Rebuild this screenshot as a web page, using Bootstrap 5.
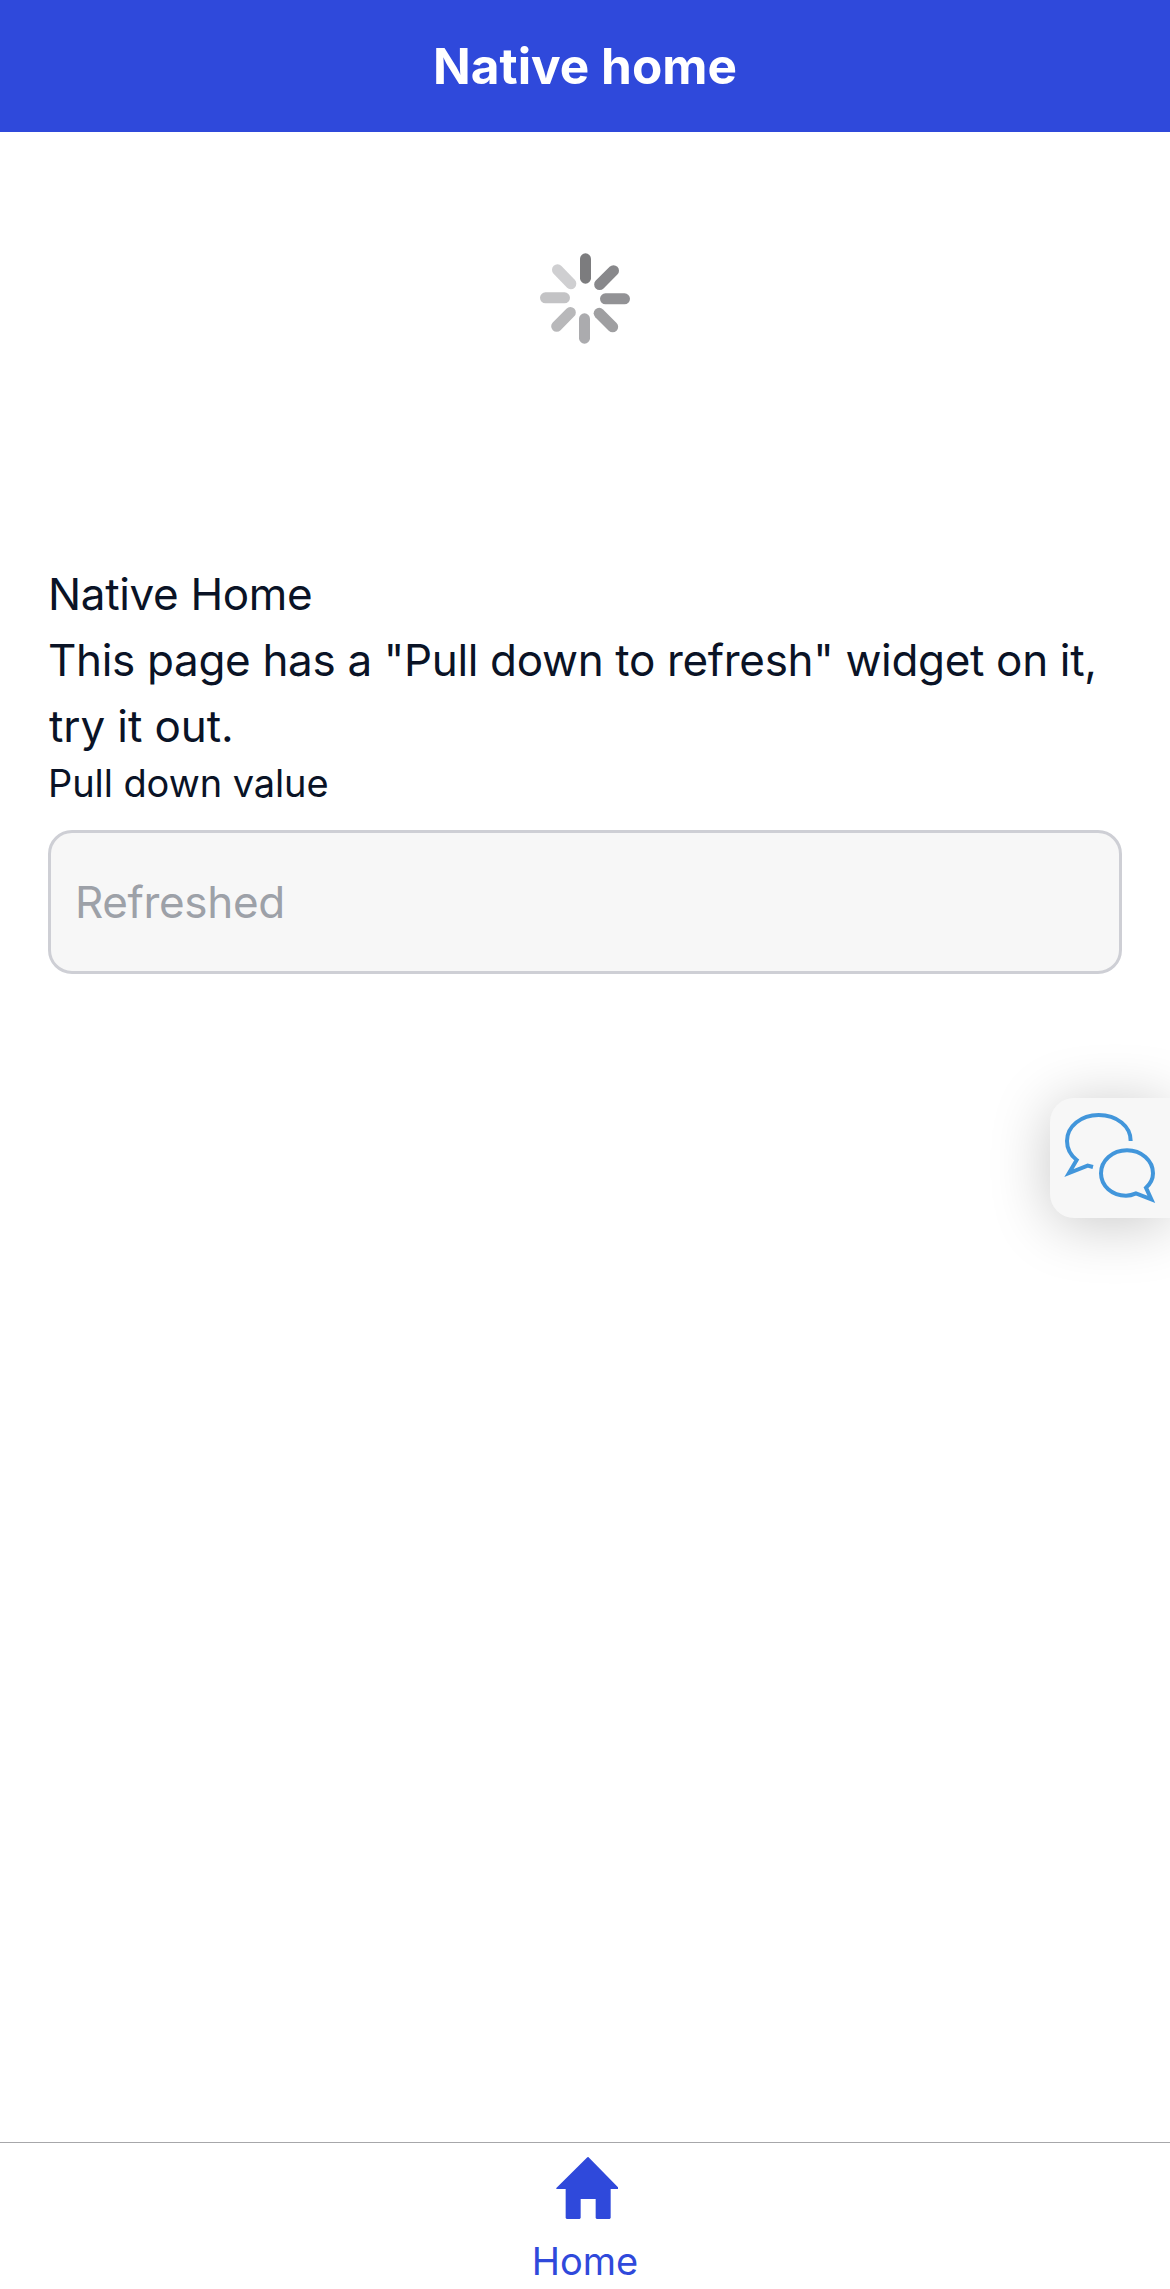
<!DOCTYPE html>
<html lang="en">
<head>
<meta charset="utf-8">
<title>Native home</title>
<meta name="viewport" content="width=device-width, initial-scale=1">
<link href="https://cdn.jsdelivr.net/npm/bootstrap@5.3.0/dist/css/bootstrap.min.css" rel="stylesheet">
<style>
body { font-family: Inter, "Liberation Sans", sans-serif; color: #0a1326; font-size: 44px; line-height: 66px; }
.app-shell { height: 2289px; }
.app-header { height: 132px; background: #2f49db; }
.app-title { font-size: 49.5px; line-height: 60px; }
.refresh-area { height: 429px; padding-top: 98px; }
.page-body { padding: 0 48px; }
.body-text { letter-spacing: -.335px; }
.last-line { letter-spacing: -.1px; padding-left: 1px; }
.field-label { font-size: 38px; line-height: 44px; margin: 2px 0 25px; letter-spacing: -.08px; }
.field-input { height: 144px; border: 3px solid #cecfd5; border-radius: 24px; background: #f7f7f7 !important; color: #9da1a8; font-size: 44px; padding: 0 24px; letter-spacing: -.35px; }
.chat-tab { top: 1098px; right: 0; width: 120px; height: 120px; border-radius: 24px 0 0 24px; background: #f7f7f7; box-shadow: 0 6px 60px rgba(0,0,0,.22); }
.tab-bar { height: 147px; border-top: 1px solid #a7a7aa; padding-top: 14px; }
.tab-item { color: #2f49db; }
.tab-icon { margin-left: 3px; }
.tab-label { font-size: 38px; line-height: 46px; margin-top: 19px; }
</style>
</head>
<body>
<div class="app-shell d-flex flex-column position-relative overflow-hidden bg-white">
  <header class="app-header d-flex align-items-center justify-content-center text-white">
    <h1 class="app-title fw-bold m-0">Native home</h1>
  </header>
  <main class="flex-grow-1">
    <div class="refresh-area d-flex justify-content-center align-items-start">
      <svg width="130" height="130" viewBox="0 0 390 390" fill="none" stroke-width="33" stroke-linecap="round">
        <path stroke="#7c7c7e" d="M196.500 86.500V144.500"/>
        <path stroke="#88888b" d="M280.500 122L239 163.500"/>
        <path stroke="#929295" d="M256.500 206.500H313.500"/>
        <path stroke="#9f9fa1" d="M237.500 250L278 290.500"/>
        <path stroke="#ababae" d="M193.500 266.500V324.500"/>
        <path stroke="#b8b8ba" d="M151 247.500L110 289"/>
        <path stroke="#c3c3c5" d="M76.500 203.500H133.500"/>
        <path stroke="#cfcfd1" d="M112.500 119.500L152.500 161"/>
      </svg>
    </div>
    <section class="page-body">
      <p class="body-text m-0">Native Home</p>
      <p class="body-text m-0">This page has a "Pull down to refresh" widget on it, <span class="last-line d-block">try it out.</span></p>
      <label class="field-label d-block" for="pull">Pull down value</label>
      <input id="pull" class="field-input form-control" type="text" value="Refreshed" disabled>
    </section>
  </main>
  <a class="chat-tab position-absolute" href="#" aria-label="Chat">
    <svg class="d-block" width="120" height="120" viewBox="180 174 360 360" fill="none" stroke="#4296db" stroke-width="12">
      <path d="M422 303C423 259 380 225 326 225C273 225 231 259 231 303C231 326 241 345 260 360L237 399L293 377L309 381"/>
      <path d="M468 443C482 431 489 417 489 400C489 362 454 331 411 331C367 331 333 362 333 400C333 438 366 467 408 467C419 467 429 464 438 460L484 478Z"/>
    </svg>
  </a>
  <nav class="tab-bar bg-white text-center">
    <a class="tab-item text-decoration-none d-inline-flex flex-column align-items-center" href="#">
      <svg class="tab-icon" width="62" height="62" viewBox="0 0 186 186" fill="currentColor"><path d="M97 0L186 91V96H164V183L161 186H122L119 183V126H74V183L71 186H32L29 183V96H1V93L94 1Z"/></svg>
      <span class="tab-label">Home</span>
    </a>
  </nav>
</div>
<script src="https://cdn.jsdelivr.net/npm/bootstrap@5.3.0/dist/js/bootstrap.bundle.min.js"></script>
</body>
</html>
